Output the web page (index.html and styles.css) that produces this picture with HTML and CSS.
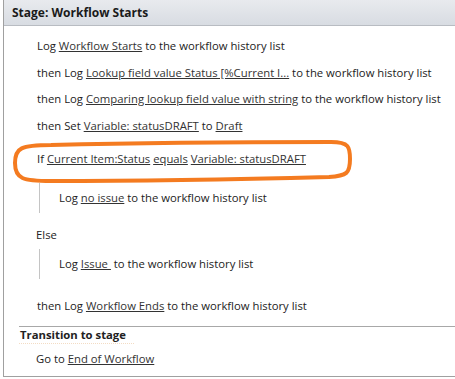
FILE: index.html
```html
<!DOCTYPE html>
<html lang="en">
<head>
    <meta charset="UTF-8">
    <title>Stage: Workflow Starts</title>
    <link rel="stylesheet" href="styles.css">
</head>
<body>
    <div class="stage">
        <div class="stage-header">Stage: Workflow Starts</div>
        <div class="stage-body">
            <div class="step">Log <a>Workflow Starts</a> to the workflow history list</div>
            <div class="step">then Log <a>Lookup field value Status [%Current I...</a> to the workflow history list</div>
            <div class="step">then Log <a>Comparing lookup field value with string</a> to the workflow history list</div>
            <div class="step">then Set <a>Variable: statusDRAFT</a> to <a>Draft</a></div>
            <div class="step cond">If <a>Current Item:Status</a> <a>equals</a> <a>Variable: statusDRAFT</a></div>
            <div class="branch first">
                <div class="step">Log <a>no issue</a> to the workflow history list</div>
            </div>
            <div class="step else">Else</div>
            <div class="branch">
                <div class="step">Log <a>Issue&nbsp;</a> to the workflow history list</div>
            </div>
            <div class="step last">then Log <a>Workflow Ends</a> to the workflow history list</div>
        </div>
        <div class="transition">
            <div class="transition-title">Transition to stage</div>
            <div class="step">Go to <a>End of Workflow</a></div>
        </div>
        <svg class="highlight" width="345" height="46" viewBox="0 0 345 46">
            <path d="M40 6 C120 4 250 3 320 3 C338 3 339 8 339 20 C339 34 336 37 318 38 C240 40 120 42 40 42 C12 42 4 40 4 24 C4 9 10 6 40 6 Z" fill="none" stroke="#f47b20" stroke-width="4"/>
        </svg>
    </div>
</body>
</html>
```

FILE: styles.css
```css
body {
    margin: 0;
    font-family: "Open Sans", "Noto Sans", sans-serif;
    font-size: 11.3px;
    color: #222;
    background: #fff;
}

.stage {
    position: relative;
    margin-left: 3px;
    width: 460px;
    height: 377px;
    border-left: 1px solid #a0a0a0;
    border-bottom: 1px solid #a0a0a0;
    box-sizing: border-box;
}

.stage-header {
    height: 26px;
    line-height: 26px;
    padding-left: 8px;
    font-weight: bold;
    font-size: 12px;
    color: #1a1a1a;
    background: linear-gradient(#e8eaee, #d8dce2);
    border-bottom: 1px solid #b8bcc2;
    box-sizing: border-box;
}

.stage-body {
    padding: 7px 0 0 33px;
}

.step {
    height: 26.5px;
    line-height: 26.5px;
    white-space: nowrap;
}

.step a {
    color: #333;
    text-decoration: underline;
}

.cond {
    margin-top: 7px;
}

.branch {
    margin-left: 2px;
    padding: 2px 0 2px 19px;
    border-left: 1px solid #c4c4c4;
}

.branch.first {
    margin-top: 10px;
}

.else {
    margin-top: 9px;
    margin-left: -1px;
}

.last {
    margin-top: 14px;
}

.transition {
    margin: 6px 0 0 15px;
    border-top: 1px solid #a8a8a8;
}

.transition-title {
    font-weight: bold;
    line-height: 16px;
    padding: 0 0 0 1px;
    width: 114px;
    border-bottom: 1px dotted #f3dcc4;
}

.transition .step {
    padding-left: 17px;
    height: 30px;
    line-height: 30px;
}

.highlight {
    position: absolute;
    left: 7px;
    top: 139px;
}
```
